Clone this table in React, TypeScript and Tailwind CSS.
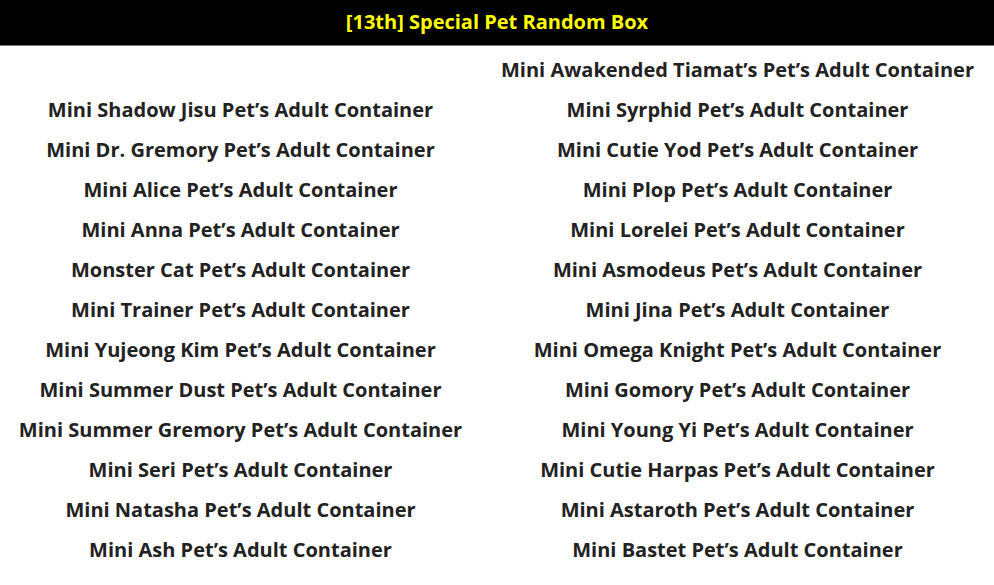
const left = [
  "",
  "Mini Shadow Jisu Pet’s Adult Container",
  "Mini Dr. Gremory Pet’s Adult Container",
  "Mini Alice Pet’s Adult Container",
  "Mini Anna Pet’s Adult Container",
  "Monster Cat Pet’s Adult Container",
  "Mini Trainer Pet’s Adult Container",
  "Mini Yujeong Kim Pet’s Adult Container",
  "Mini Summer Dust Pet’s Adult Container",
  "Mini Summer Gremory Pet’s Adult Container",
  "Mini Seri Pet’s Adult Container",
  "Mini Natasha Pet’s Adult Container",
  "Mini Ash Pet’s Adult Container",
];

const right = [
  "Mini Awakended Tiamat’s Pet’s Adult Container",
  "Mini Syrphid Pet’s Adult Container",
  "Mini Cutie Yod Pet’s Adult Container",
  "Mini Plop Pet’s Adult Container",
  "Mini Lorelei Pet’s Adult Container",
  "Mini Asmodeus Pet’s Adult Container",
  "Mini Jina Pet’s Adult Container",
  "Mini Omega Knight Pet’s Adult Container",
  "Mini Gomory Pet’s Adult Container",
  "Mini Young Yi Pet’s Adult Container",
  "Mini Cutie Harpas Pet’s Adult Container",
  "Mini Astaroth Pet’s Adult Container",
  "Mini Bastet Pet’s Adult Container",
];

export default function App() {
  return (
    <div className="w-[994px] h-[585px] bg-white overflow-hidden font-['Open_Sans',sans-serif]">
      <div className="h-[46px] pb-[2px] bg-black border-b border-[#7a7a7a] flex items-center justify-center">
        <h1 className="text-[20px] font-bold text-[#ffff00] leading-none">
          [13th] Special Pet Random Box
        </h1>
      </div>
      <div className="grid grid-cols-[481px_1fr] pt-[4px]">
        {left.map((l, i) => (
          <div key={i} className="contents">
            <div className="h-[40px] flex items-center justify-center text-[20px] font-bold text-[#222]">
              {l}
            </div>
            <div className="h-[40px] flex items-center justify-center text-[20px] font-bold text-[#222]">
              {right[i]}
            </div>
          </div>
        ))}
      </div>
    </div>
  );
}
